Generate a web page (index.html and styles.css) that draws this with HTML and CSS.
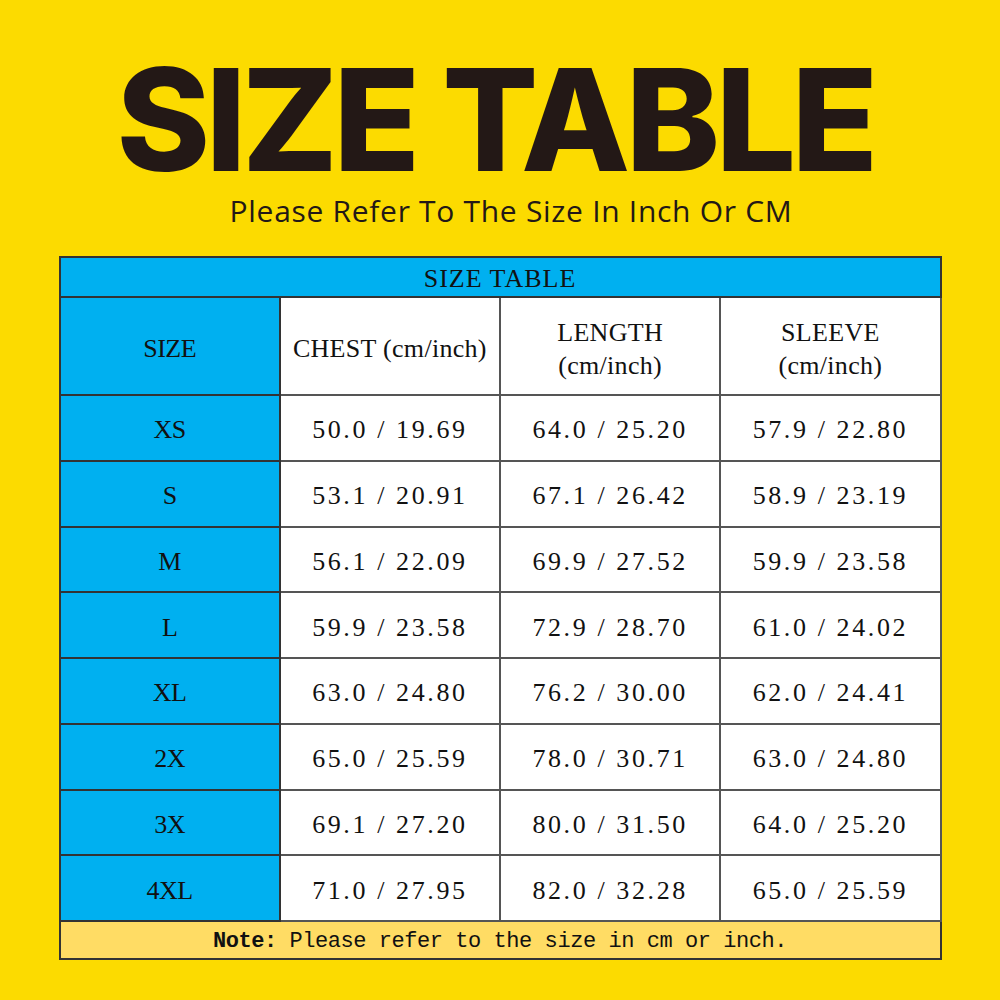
FILE: index.html
```html
<!DOCTYPE html>
<html>
<head>
<meta charset="utf-8">
<link rel="stylesheet" href="styles.css">
</head>
<body>
<div class="page">
  <h1 class="title">SIZE TABLE</h1>
  <p class="subtitle">Please Refer To The Size In Inch Or CM</p>
  <table class="sizes">
    <tr class="row-caption"><td colspan="4">SIZE TABLE</td></tr>
    <tr class="row-head">
      <td class="size">SIZE</td>
      <td>CHEST (cm/inch)</td>
      <td>LENGTH<br>(cm/inch)</td>
      <td>SLEEVE<br>(cm/inch)</td>
    </tr>
    <tr class="row-data"><td class="size">XS</td><td>50.0 / 19.69</td><td>64.0 / 25.20</td><td>57.9 / 22.80</td></tr>
    <tr class="row-data"><td class="size">S</td><td>53.1 / 20.91</td><td>67.1 / 26.42</td><td>58.9 / 23.19</td></tr>
    <tr class="row-data"><td class="size">M</td><td>56.1 / 22.09</td><td>69.9 / 27.52</td><td>59.9 / 23.58</td></tr>
    <tr class="row-data"><td class="size">L</td><td>59.9 / 23.58</td><td>72.9 / 28.70</td><td>61.0 / 24.02</td></tr>
    <tr class="row-data"><td class="size">XL</td><td>63.0 / 24.80</td><td>76.2 / 30.00</td><td>62.0 / 24.41</td></tr>
    <tr class="row-data"><td class="size">2X</td><td>65.0 / 25.59</td><td>78.0 / 30.71</td><td>63.0 / 24.80</td></tr>
    <tr class="row-data"><td class="size">3X</td><td>69.1 / 27.20</td><td>80.0 / 31.50</td><td>64.0 / 25.20</td></tr>
    <tr class="row-data"><td class="size">4XL</td><td>71.0 / 27.95</td><td>82.0 / 32.28</td><td>65.0 / 25.59</td></tr>
    <tr class="row-note"><td colspan="4"><b>Note:</b> Please refer to the size in cm or inch.</td></tr>
  </table>
</div>
</body>
</html>
```
FILE: styles.css
```css
html, body {
  margin: 0;
  padding: 0;
}
body {
  background: #fcdb00;
  width: 1000px;
  height: 1000px;
  overflow: hidden;
}
.page {
  display: flex;
  flex-direction: column;
  align-items: center;
}
.title {
  margin: 59px 10px 0 0;
  font-family: "Inter", "DejaVu Sans", sans-serif;
  font-weight: 800;
  font-size: 142px;
  line-height: 120px;
  height: 120px;
  color: #231816;
  letter-spacing: -4.5px;
  white-space: nowrap;
}
.subtitle {
  margin: 12px 0 0 22px;
  font-family: "Open Sans", "Noto Sans", sans-serif;
  font-size: 30px;
  line-height: 40px;
  height: 40px;
  color: #231816;
  letter-spacing: 0.7px;
  white-space: nowrap;
}
.sizes {
  margin-top: 25px;
  width: 883px;
  border-collapse: collapse;
  table-layout: fixed;
  border: 2px solid #333;
  font-family: "Liberation Serif", serif;
  font-size: 26px;
  color: #111;
}
.sizes td {
  border: 2px solid #555;
  text-align: center;
  vertical-align: middle;
  padding: 5px 0 0 0;
  background: #fff;
  letter-spacing: 2.6px;
}
.row-caption td {
  background: #00b0f0;
  height: 35px;
  padding-top: 3px;
  border-color: #333;
  letter-spacing: 1px;
}
.row-head td {
  height: 91px;
  line-height: 33px;
  letter-spacing: 0.3px;
}
.row-data td {
  height: 58.75px;
}
.sizes td.size {
  background: #00b0f0;
  width: 218px;
  border-color: #333;
  letter-spacing: -0.5px;
}
.row-note td {
  background: #ffdc64;
  height: 33px;
  padding-top: 3px;
  border-color: #333;
  font-family: "Liberation Mono", monospace;
  font-size: 22px;
  letter-spacing: -0.45px;
}
.row-note b {
  font-weight: bold;
}
```
